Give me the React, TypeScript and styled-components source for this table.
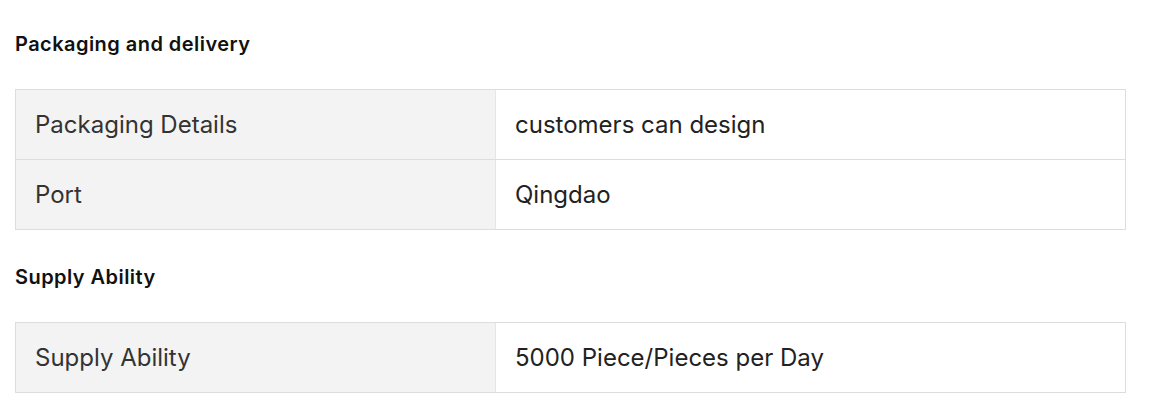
import styled, { createGlobalStyle } from "styled-components"
import { Fragment } from "react"

const GlobalStyle = createGlobalStyle`
	body {
		margin: 0;
		background: #fff;
		font-family: Inter, "Noto Sans", sans-serif;
		color: #222;
	}
`

const sections = [
	{
		title: "Packaging and delivery",
		rows: [
			["Packaging Details", "customers can design"],
			["Port", "Qingdao"],
		],
	},
	{
		title: "Supply Ability",
		rows: [["Supply Ability", "5000 Piece/Pieces per Day"]],
	},
]

const Page = styled.div`
	padding: 0 32px 0 15px;
	display: flex;
	flex-direction: column;
`

const Section = styled.section`
	display: flex;
	flex-direction: column;
	& + & h3 {
		padding-top: 35px;
		padding-bottom: 33px;
	}
`

const Title = styled.h3`
	margin: 0;
	padding: 32px 0 33px;
	font-size: 20px;
	line-height: 24px;
	font-weight: 600;
	letter-spacing: 0.45px;
	color: #111;
`

const Table = styled.div`
	display: grid;
	grid-template-columns: 480px 1fr;
	border: 1px solid #ddd;
	border-bottom: none;
`

const Cell = styled.div<{ $label?: boolean }>`
	box-sizing: border-box;
	height: 70px;
	display: flex;
	align-items: center;
	padding: 0 19px;
	font-size: 24px;
	color: ${(p) => (p.$label ? "#333" : "#222")};
	background: ${(p) => (p.$label ? "#f3f3f3" : "#fff")};
	border-bottom: 1px solid #ddd;
	border-right: ${(p) => (p.$label ? "1px solid #e6e6e6" : "none")};
`

export default function App() {
	return (
		<>
			<GlobalStyle />
			<Page>
				{sections.map((s) => (
					<Section key={s.title}>
						<Title>{s.title}</Title>
						<Table>
							{s.rows.map(([k, v]) => (
								<Fragment key={k}>
									<Cell $label>{k}</Cell>
									<Cell>{v}</Cell>
								</Fragment>
							))}
						</Table>
					</Section>
				))}
			</Page>
		</>
	)
}
